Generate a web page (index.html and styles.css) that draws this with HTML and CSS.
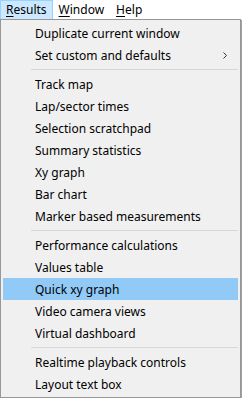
FILE: index.html
```
<!DOCTYPE html>
<html lang="en">
  <head>
    <meta charset="UTF-8" />
    <meta name="viewport" content="width=device-width, initial-scale=1.0" />
    <title>Results menu</title>
    <link rel="stylesheet" href="styles.css">
  </head>
  <body>
    <div class="menubar">
      <div class="menubar-item open"><u>R</u>esults</div>
      <div class="menubar-item"><u>W</u>indow</div>
      <div class="menubar-item"><u>H</u>elp</div>
    </div>

    <div class="dropdown">
      <div class="menu-item">Duplicate current window</div>
      <div class="menu-item has-sub">
        Set custom and defaults
        <svg class="chevron" width="4" height="7" viewBox="0 0 4 7">
          <path d="M0.5 0.5 L3.5 3.5 L0.5 6.5" fill="none" stroke="#333" stroke-width="1" />
        </svg>
      </div>
      <div class="separator"></div>
      <div class="menu-item">Track map</div>
      <div class="menu-item">Lap/sector times</div>
      <div class="menu-item">Selection scratchpad</div>
      <div class="menu-item">Summary statistics</div>
      <div class="menu-item">Xy graph</div>
      <div class="menu-item">Bar chart</div>
      <div class="menu-item">Marker based measurements</div>
      <div class="separator"></div>
      <div class="menu-item">Performance calculations</div>
      <div class="menu-item">Values table</div>
      <div class="menu-item active">Quick xy graph</div>
      <div class="menu-item">Video camera views</div>
      <div class="menu-item">Virtual dashboard</div>
      <div class="separator"></div>
      <div class="menu-item">Realtime playback controls</div>
      <div class="menu-item">Layout text box</div>
    </div>
  </body>
</html>
```

FILE: styles.css
```
body {
  margin: 0;
  font-family: "Noto Sans", "Open Sans", sans-serif;
  font-size: 12px;
  color: #000;
  background: #fff;
}
.menubar {
  display: flex;
  height: 19px;
  background: #fff;
}
.menubar-item {
  padding: 0 5px;
  line-height: 18px;
  border: 1px solid transparent;
  border-bottom: none;
}
.menubar-item.open {
  background: #cce8ff;
  border-color: #99d1ff;
}
.menubar-item u {
  text-decoration-thickness: 1px;
  text-underline-offset: 2px;
}
.dropdown {
  width: 235px;
  padding: 2px;
  background: #f0f0f0;
  border: 1px solid #979797;
  box-shadow: 1px 1px 0 #a0a0a0, 2px 2px 1px rgba(0, 0, 0, 0.25);
}
.menu-item {
  display: flex;
  align-items: center;
  height: 22px;
  padding-left: 32px;
  padding-right: 10px;
}
.menu-item.has-sub {
  justify-content: space-between;
}
.menu-item.active {
  background: #91c9f7;
}
.chevron {
  margin-right: 1px;
}
.separator {
  height: 1px;
  margin: 3px 0 3px 28px;
  background: #d7d7d7;
}
```
